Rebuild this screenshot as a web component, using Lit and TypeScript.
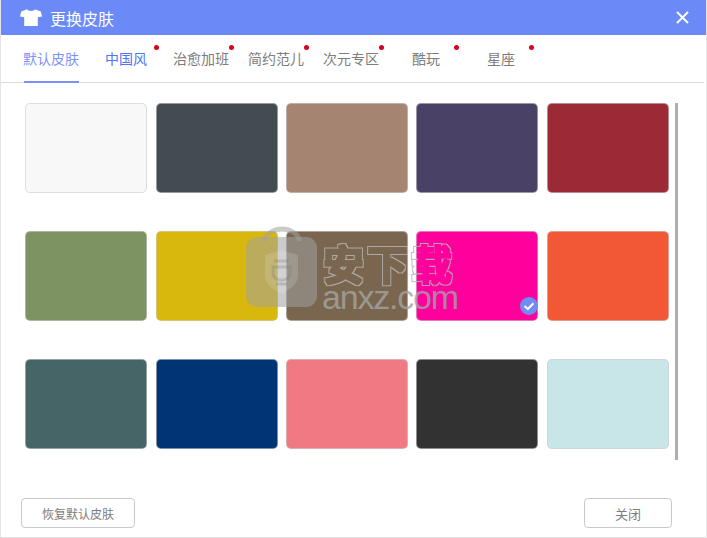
import { LitElement, html, css } from "lit";
import { customElement } from "lit/decorators.js";

const tabs = [
  { t: "默认皮肤", active: true },
  { t: "中国风", blue: true, dot: true },
  { t: "治愈加班", dot: true },
  { t: "简约范儿", dot: true },
  { t: "次元专区", dot: true },
  { t: "酷玩", dot: true },
  { t: "星座", dot: true },
];
const colors = [
  "#f8f8f8", "#434c51", "#a58572", "#4a4266", "#9c2a34",
  "#7d9362", "#d9b80d", "#7a664e", "#ff009c", "#f25835",
  "#456566", "#003473", "#ef7a84", "#323232", "#c8e6e8",
];

@customElement("app-root")
export class AppRoot extends LitElement {
  static styles = css`
    :host { display: block; width: 707px; height: 538px; font-family: "Noto Sans CJK SC", "Liberation Sans", sans-serif; }
    .win { position: relative; width: 707px; height: 538px; box-sizing: border-box; display: flex; flex-direction: column; background: #fff; border: 1px solid #e4e4e4; border-top: 0; overflow: hidden; }
    .title { flex: none; height: 35px; margin: 0 -1px; background: #6b8af8; color: #fff; display: flex; align-items: center; padding: 0 18px 0 20px; font-size: 16px; }
    .title svg.shirt { margin-right: 8px; }
    .title .x { margin-left: auto; }
    .tabs { flex: none; height: 48px; margin-right: 2px; box-sizing: border-box; border-bottom: 1px solid #dedede; display: flex; padding-left: 12.5px; font-size: 14px; color: #7d7d7d; }
    .tab { position: relative; box-sizing: border-box; width: 75px; height: 47px; line-height: 47px; text-align: center; white-space: nowrap; }
    .tab.active { color: #7d93f8; }
    .tab.active::after { content: ""; position: absolute; left: 10px; width: 55px; bottom: -1px; height: 2px; background: #7b90fb; }
    .tab.blue { color: #4f74f5; }
    .dot { position: absolute; top: 10px; left: 65px; width: 5px; height: 5px; border-radius: 50%; background: #d9001b; }
    .body { flex: 1; display: flex; padding: 20px 30px 0 24.2px; }
    .grid { display: grid; grid-template-columns: repeat(5, 122px); grid-auto-rows: 90px; column-gap: 8.4px; row-gap: 38px; align-content: start; }
    .card { position: relative; box-sizing: border-box; border-radius: 5px; border: 1px solid rgba(205,205,205,0.6); }
    .check { position: absolute; right: -1px; bottom: 5px; }
    .bar { position: absolute; left: 674px; top: 103px; width: 3px; height: 357px; background: #aeaeae; }
    .foot { flex: none; height: 39px; box-sizing: border-box; display: flex; justify-content: space-between; align-items: flex-start; padding: 0 34px 0 20px; }
    button { box-sizing: border-box; height: 30px; background: #fff; border: 1px solid #c9c9c9; border-radius: 4px; color: #7d7d7d; font: inherit; padding: 0; }
    .reset { width: 114px; font-size: 12px; }
    .close { width: 88px; font-size: 13px; }
    .mark { position: absolute; left: 244px; top: 226px; pointer-events: none; }
    .wm { position: absolute; left: 321px; top: 286px; font-family: "Liberation Sans", sans-serif; font-size: 34px; letter-spacing: -1.2px; line-height: 23px; color: rgba(165,165,165,0.8); pointer-events: none; white-space: nowrap; }
    .wm2 { position: absolute; left: 322px; top: 240px; height: 45px; font-size: 41px; font-weight: 700; line-height: 45px; letter-spacing: 3px; color: #000; filter: url(#bubble); pointer-events: none; white-space: nowrap; }
    .defs { position: absolute; width: 0; height: 0; }
  `;

  render() {
    return html`<div class="win">
      <svg class="defs" aria-hidden="true">
        <filter id="bubble" x="-10%" y="-10%" width="120%" height="120%" color-interpolation-filters="sRGB">
          <feMorphology in="SourceAlpha" operator="dilate" radius="2.4" result="outer"/>
          <feMorphology in="SourceAlpha" operator="dilate" radius="1.2" result="inner"/>
          <feGaussianBlur in="outer" stdDeviation="0.5" result="o2"/>
          <feGaussianBlur in="inner" stdDeviation="0.5" result="i2"/>
          <feComposite in="o2" in2="i2" operator="out" result="ring"/>
          <feFlood flood-color="#b4b4b4" flood-opacity="0.85"/>
          <feComposite in2="ring" operator="in"/>
        </filter>
      </svg>
      <div class="title">
        <svg class="shirt" width="22" height="17" viewBox="0 0 22 17"><path fill="#fff" d="M7 .3 1.2 2.4 0 7.4l4.2.9V17h13.6V8.3l4.2-.9-1.2-5L15 .3C14 2.6 8 2.6 7 .3Z"/></svg>
        <span>更换皮肤</span>
        <svg class="x" width="13" height="13" viewBox="0 0 13 13"><path stroke="#fff" stroke-width="2" d="M1 1l11 11M12 1 1 12"/></svg>
      </div>
      <div class="tabs">
        ${tabs.map(
          (t) => html`<div class="tab ${t.active ? "active" : ""} ${t.blue ? "blue" : ""}">
            ${t.t}${t.dot ? html`<span class="dot"></span>` : ""}
          </div>`
        )}
      </div>
      <div class="body">
        <div class="grid">
          ${colors.map(
            (c, i) => html`<div class="card" style="background:${c}">
              ${i === 8
                ? html`<svg class="check" width="18" height="18" viewBox="0 0 18 18"><circle cx="9" cy="9" r="9" fill="#6f8cf5"/><path d="M4.5 9 7.8 12 13.5 6.2" fill="none" stroke="#fff" stroke-width="2"/></svg>`
                : ""}
            </div>`
          )}
        </div>
      </div>
      <div class="foot">
        <button class="reset">恢复默认皮肤</button>
        <button class="close">关闭</button>
      </div>
      <div class="bar"></div>
      <svg class="mark" width="74" height="82" viewBox="0 0 74 82">
        <path d="M19 15C24 -1 50 -1 55 15" fill="none" stroke="rgba(160,160,160,.55)" stroke-width="5"/>
        <rect x="1" y="11" width="71" height="70" rx="11" fill="rgba(160,160,160,.55)"/>
        <path d="M20 29 36.5 24 53 29V50C53 59 43 64 36.5 68 30 64 20 59 20 50Z" fill="rgba(255,255,255,.14)"/>
        <path d="M29 35H44M28 41H45V47C45 52 41 54 36.5 54S28 52 28 47ZM31 58H42" fill="none" stroke="rgba(120,120,120,.28)" stroke-width="3"/>
      </svg>
      <div class="wm2">安下载</div>
      <div class="wm">anxz.com</div>
    </div>`;
  }
}
